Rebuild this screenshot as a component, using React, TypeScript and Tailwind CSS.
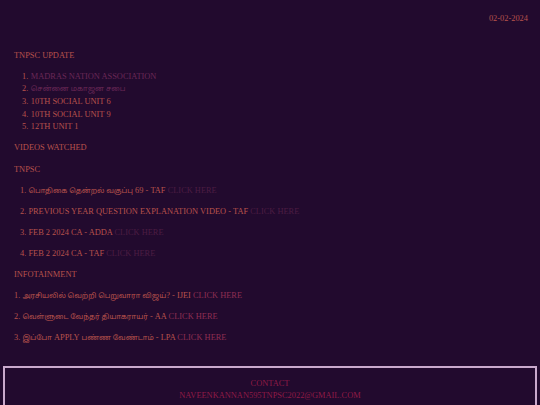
// Tamil glyphs render narrower in the reference, so they get a smaller size
function Mixed({ text }: { text: string }) {
  const parts = text.split(/([\u0B80-\u0BFF][\u0B80-\u0BFF\s]*[\u0B80-\u0BFF])/)
  return (
    <>
      {parts.map((p, i) =>
        /[\u0B80-\u0BFF]/.test(p) ? (
          <span key={i} className="text-[7.3px]">{p}</span>
        ) : (
          <span key={i}>{p}</span>
        )
      )}
    </>
  )
}

const updates = [
  { text: 'MADRAS NATION ASSOCIATION', visited: true },
  { text: 'சென்னை மகாஜன சபை', visited: true },
  { text: '10TH SOCIAL UNIT 6', visited: false },
  { text: '10TH SOCIAL UNIT 9', visited: false },
  { text: '12TH UNIT 1', visited: false },
]

const videos = [
  'பொதிகை தென்றல் வகுப்பு 69 - TAF',
  'PREVIOUS YEAR QUESTION EXPLANATION VIDEO - TAF',
  'FEB 2 2024 CA - ADDA',
  'FEB 2 2024 CA - TAF',
]

const infotainment = [
  'அரசியலில் வெற்றி பெறுவாரா விஜய்? - IJEI',
  'வெள்ளுடை வேந்தர் தியாகராயர் - AA',
  'இப்போ APPLY பண்ண வேண்டாம் - LPA',
]

export default function App() {
  return (
    <div
      className="min-h-[405px] h-[405px] overflow-hidden bg-[#220a2e] text-[#b8524c] text-[8.4px] leading-[12.7px]"
      style={{ fontFamily: '"Liberation Serif", "Noto Sans Tamil", serif' }}
    >
      <div className="pt-[13px] pr-[12px] text-right">02-02-2024</div>

      <div className="px-[14px]">
        <div className="mt-[24px]">TNPSC UPDATE</div>

        <ol className="mt-[8.3px] pl-[8px]">
          {updates.map((u, i) => (
            <li key={i} className="flex gap-[2.5px] h-[12.7px]">
              <span>{i + 1}.</span>
              <span className={u.visited ? 'text-[#6a2856]' : ''}>
                <Mixed text={u.text} />
              </span>
            </li>
          ))}
        </ol>

        <div className="mt-[8px]">VIDEOS WATCHED</div>
        <div className="mt-[9.3px]">TNPSC</div>

        <div className="pl-[6px]">
          {videos.map((v, i) => (
            <div key={i} className="mt-[8.3px] h-[12.7px]">
              {i + 1}. <Mixed text={v} /> <span className="text-[#4c1d43]">CLICK HERE</span>
            </div>
          ))}
        </div>

        <div className="mt-[8.3px]">INFOTAINMENT</div>

        {infotainment.map((v, i) => (
          <div key={i} className="mt-[8.3px] h-[12.7px]">
            {i + 1}. <Mixed text={v} /> <span className="text-[#8e2e52]">CLICK HERE</span>
          </div>
        ))}
      </div>

      <div className="mx-[3px] mt-[21px] border-2 border-[#c9a9cc] pt-[10px] pb-[10px] text-center text-[#901a46]">
        <div>CONTACT</div>
        <div>NAVEENKANNAN595TNPSC2022@GMAIL.COM</div>
      </div>
    </div>
  )
}
